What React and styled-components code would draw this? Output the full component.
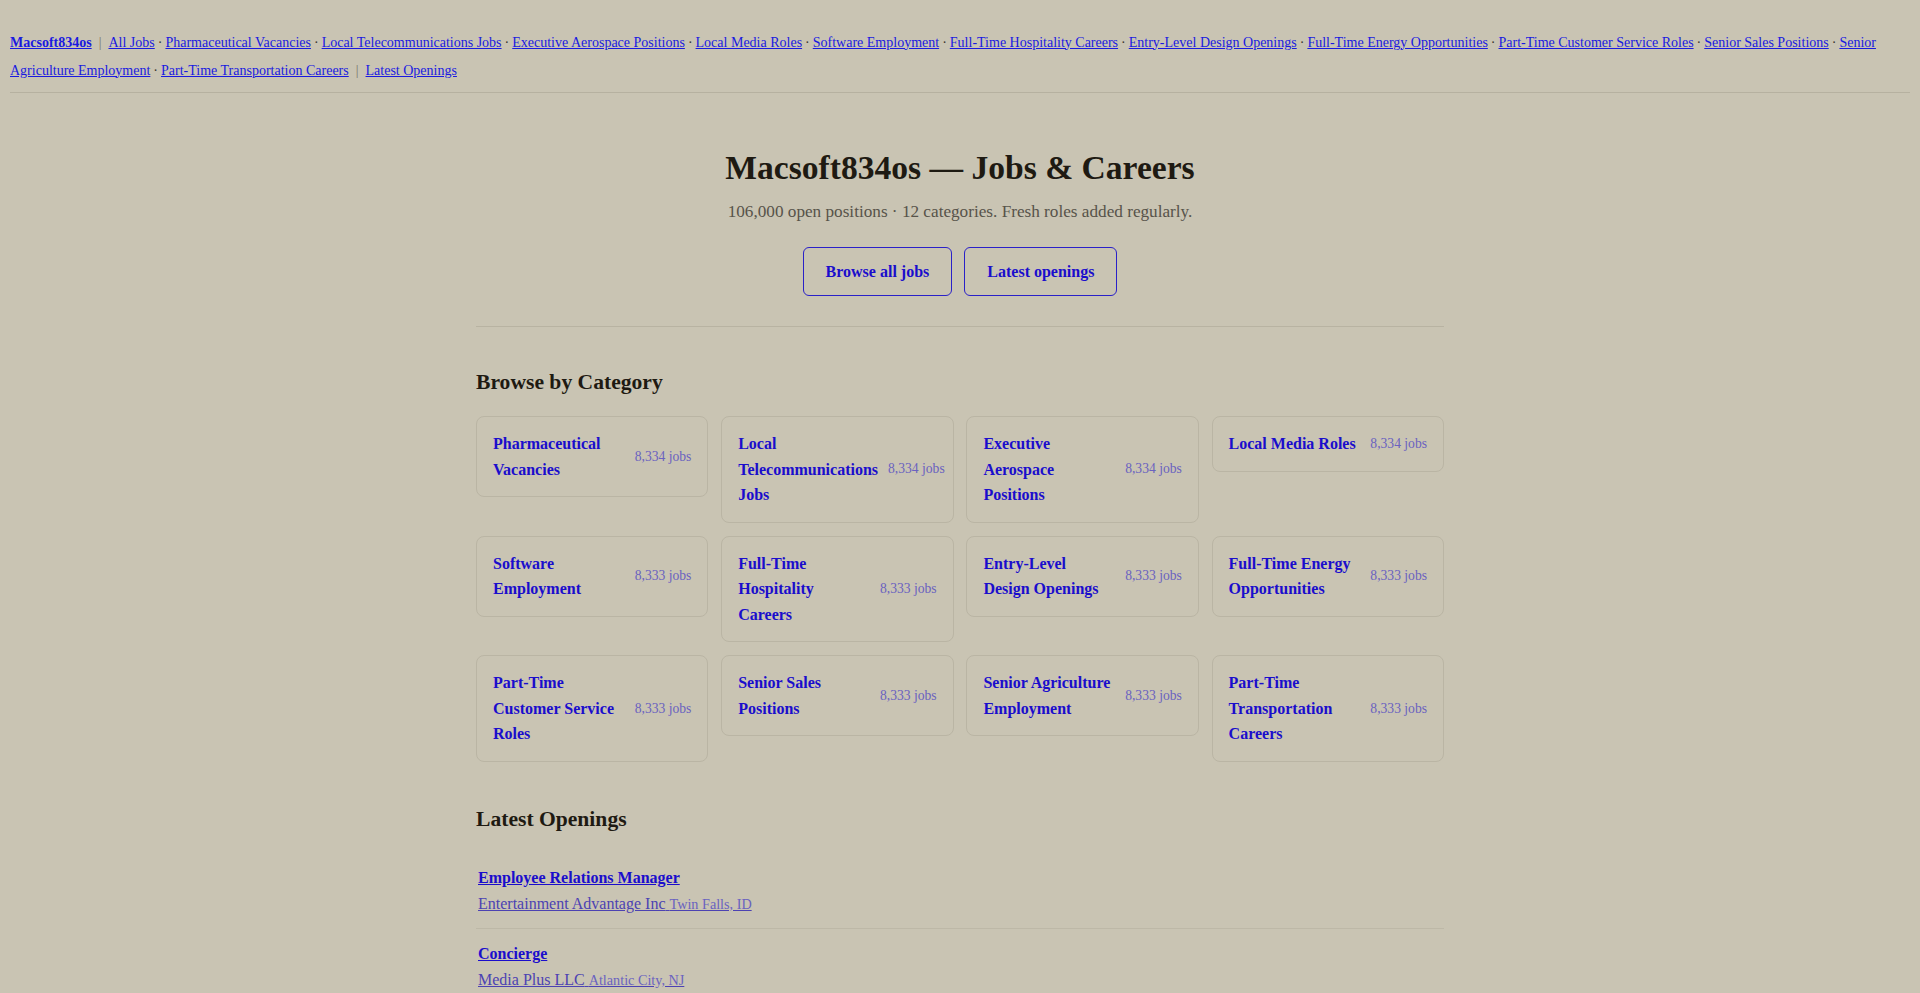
import React from "react";
import styled, { createGlobalStyle } from "styled-components";

// ------------------------------data---------------------------------------
const categories = [
  { name: "Pharmaceutical Vacancies", count: "8,334" },
  { name: "Local Telecommunications Jobs", count: "8,334" },
  { name: "Executive Aerospace Positions", count: "8,334" },
  { name: "Local Media Roles", count: "8,334" },
  { name: "Software Employment", count: "8,333" },
  { name: "Full-Time Hospitality Careers", count: "8,333" },
  { name: "Entry-Level Design Openings", count: "8,333" },
  { name: "Full-Time Energy Opportunities", count: "8,333" },
  { name: "Part-Time Customer Service Roles", count: "8,333" },
  { name: "Senior Sales Positions", count: "8,333" },
  { name: "Senior Agriculture Employment", count: "8,333" },
  { name: "Part-Time Transportation Careers", count: "8,333" },
];

const openings = [
  { title: "Employee Relations Manager", company: "Entertainment Advantage Inc", place: "Twin Falls, ID" },
  { title: "Concierge", company: "Media Plus LLC", place: "Atlantic City, NJ" },
  { title: "Pharmacy Technician", company: "Bright Health Partners", place: "Tucson, AZ" },
  { title: "Network Engineer", company: "Summit Telecom Group", place: "Raleigh, NC" },
  { title: "Sales Associate", company: "Northway Retail Co", place: "Boise, ID" },
  { title: "Graphic Designer", company: "Bluefield Studio", place: "Portland, OR" },
];

// ------------------------------styles---------------------------------------
const GlobalStyle = createGlobalStyle`
  html, body {
    margin: 0;
    padding: 0;
    background: #c9c4b3;
  }
  body {
    font-family: "Liberation Serif", "Times New Roman", serif;
    color: #1f1b14;
  }
  * {
    box-sizing: border-box;
  }
`;

const Page = styled.div`
  padding: 0 10px 40px;
`;

const TopNav = styled.nav`
  padding: 28.5px 0 7.5px;
  border-bottom: 1px solid #b6b1a0;
  font-size: 14px;
  line-height: 28px;
  color: #3a362e;
`;

const NavLink = styled.a`
  color: #1a1ae0;
  text-decoration: underline;
  font-weight: ${(prop) => (prop.$brand ? "bold" : "normal")};
`;

const Sep = styled.span`
  color: #77736a;
  margin: 0 7px;
`;

const Dot = styled.span`
  margin: 0 3px;
`;

const Main = styled.main`
  max-width: 1000px;
  margin: 0 auto;
  padding: 0 16px;
`;

const Hero = styled.header`
  text-align: center;
  padding: 55px 0 30px;
  border-bottom: 1px solid #b8b3a2;
`;

const Title = styled.h1`
  margin: 0;
  font-size: 33.6px;
  line-height: 1.2;
  font-weight: bold;
  color: #1e1a12;
`;

const Subtitle = styled.p`
  margin: 10.5px 0 0;
  font-size: 17.2px;
  line-height: 1.5;
  color: #57534a;
`;

const Actions = styled.div`
  display: flex;
  justify-content: center;
  gap: 12px;
  margin-top: 22px;
`;

const Button = styled.a`
  display: inline-block;
  padding: 14px 22px;
  border: 1px solid #2a20c8;
  border-radius: 6px;
  font-size: 16px;
  line-height: 1.2;
  font-weight: bold;
  color: #1a0dcc;
  text-decoration: none;
`;

const Section = styled.section`
  padding-top: 43px;
`;

const SectionTitle = styled.h2`
  margin: 0 0 20.3px;
  font-size: 21.6px;
  line-height: 1.2;
  font-weight: bold;
  color: #1e1a12;
`;

const Grid = styled.div`
  display: grid;
  grid-template-columns: repeat(4, minmax(0, 1fr));
  gap: 12.8px;
  align-items: start;
  margin-bottom: 2px;
`;

const Card = styled.div`
  display: flex;
  align-items: center;
  gap: 10px;
  padding: 14px 16px;
  border: 1px solid #bab5a4;
  border-radius: 8px;
`;

const CardTitle = styled.a`
  flex: 1;
  font-size: 16px;
  line-height: 1.6;
  font-weight: bold;
  color: #1a0dcc;
  text-decoration: none;
`;

const CardCount = styled.span`
  flex-shrink: 0;
  white-space: nowrap;
  font-size: 13.6px;
  color: #6a62c0;
`;

const List = styled.div``;

const Item = styled.div`
  padding: 12px 2px;
  border-bottom: 1px solid #bdb8a7;
  line-height: 1.6;
`;

const JobTitle = styled.a`
  font-size: 16px;
  font-weight: bold;
  color: #1a0dcc;
  text-decoration: underline;
`;

const Company = styled.a`
  font-size: 16px;
  color: #4c42b2;
  text-decoration: underline;
`;

const Place = styled.span`
  font-size: 14.2px;
  color: #6a62c0;
`;

// ------------------------main component--------------------------------------
const App = () => {
  return (
    <Page>
      <GlobalStyle />
      <TopNav>
        <NavLink $brand href="#">
          Macsoft834os
        </NavLink>
        <Sep>|</Sep>
        <NavLink href="#">All Jobs</NavLink>
        {categories.map((c) => (
          <React.Fragment key={c.name}>
            <Dot>·</Dot>
            <NavLink href="#">{c.name}</NavLink>
          </React.Fragment>
        ))}
        <Sep>|</Sep>
        <NavLink href="#">Latest Openings</NavLink>
      </TopNav>

      <Main>
        <Hero>
          <Title>Macsoft834os — Jobs &amp; Careers</Title>
          <Subtitle>
            106,000 open positions · 12 categories. Fresh roles added regularly.
          </Subtitle>
          <Actions>
            <Button href="#">Browse all jobs</Button>
            <Button href="#">Latest openings</Button>
          </Actions>
        </Hero>

        <Section>
          <SectionTitle>Browse by Category</SectionTitle>
          <Grid>
            {categories.map((c) => (
              <Card key={c.name}>
                <CardTitle href="#">{c.name}</CardTitle>
                <CardCount>{c.count} jobs</CardCount>
              </Card>
            ))}
          </Grid>
        </Section>

        <Section>
          <SectionTitle>Latest Openings</SectionTitle>
          <List>
            {openings.map((o) => (
              <Item key={o.title}>
                <div>
                  <JobTitle href="#">{o.title}</JobTitle>
                </div>
                <div>
                  <Company href="#">
                    {o.company} <Place>{o.place}</Place>
                  </Company>
                </div>
              </Item>
            ))}
          </List>
        </Section>
      </Main>
    </Page>
  );
};

export default App;
